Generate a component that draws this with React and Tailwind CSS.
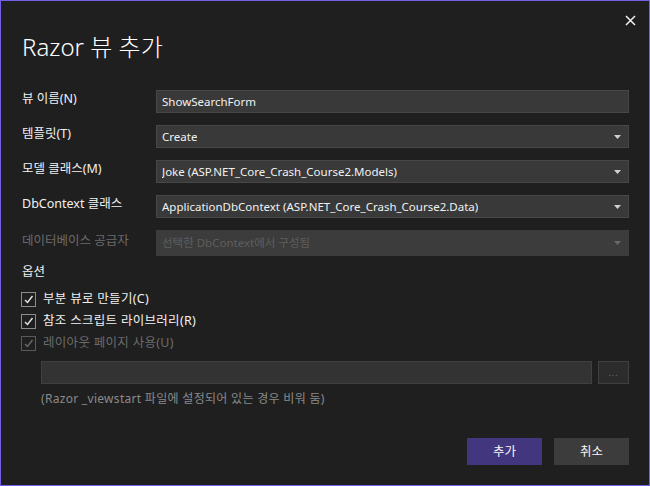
const font = { fontFamily: '"Noto Sans", "Noto Sans CJK KR", sans-serif' }

const Arrow = ({ dim }) => (
  <svg width="7" height="4" viewBox="0 0 7 4" className="mr-[2px] shrink-0">
    <path d="M0 0h7L3.5 4z" fill={dim ? '#6a6a6a' : '#d0d0d0'} />
  </svg>
)

const CheckMark = ({ color }) => (
  <svg width="11" height="11" viewBox="0 0 11 11">
    <path d="M2 6l2.5 2.5L9.5 2" fill="none" stroke={color} strokeWidth="1.4" />
  </svg>
)

const Field = ({ label, value, select, disabled }) => (
  <div className="flex items-center">
    <div
      className={`w-[135px] shrink-0 pl-px pb-[5px] text-[12.5px] ${disabled ? 'text-[#6b6b6b]' : 'text-[#f1f1f1]'}`}
    >
      {label}
    </div>
    <div
      className={`flex flex-1 items-center justify-between border px-[5px] text-[11.5px] ${
        disabled
          ? 'h-[26px] border-[#3c3c3c] bg-[#3c3c3c] text-[#5e5e5e]'
          : 'h-[23px] border-[#474747] bg-[#393939] text-[#f1f1f1]'
      }`}
    >
      <span className="truncate">{value}</span>
      {select && <Arrow dim={disabled} />}
    </div>
  </div>
)

const Checkbox = ({ label, disabled }) => (
  <label className="flex items-center gap-[7px]">
    <span
      className={`flex h-[15px] w-[15px] items-center justify-center border ${
        disabled ? 'border-[#5a5a5a]' : 'border-[#8c8c8c]'
      }`}
    >
      <CheckMark color={disabled ? '#6a6a6a' : '#e8e8e8'} />
    </span>
    <span className={`text-[12.5px] tracking-[0.3px] ${disabled ? 'text-[#6b6b6b]' : 'text-[#f1f1f1]'}`}>
      {label}
    </span>
  </label>
)

export default function App() {
  return (
    <div
      className="flex h-[486px] w-[650px] flex-col border border-[#7160e8] bg-[#1f1f1f] text-[12px] leading-[16px]"
      style={font}
    >
      <div className="flex justify-end pr-[13px] pt-[14px]">
        <svg width="11" height="11" viewBox="0 0 11 11">
          <path d="M1 1l9 9M10 1l-9 9" stroke="#f2f2f2" strokeWidth="1.5" />
        </svg>
      </div>

      <div className="px-[20px]">
        <h1 className="pl-px pt-[6px] text-[24px] font-light leading-[30px] text-white">
          Razor 뷰 추가
        </h1>

        <div className="mt-[28px] flex flex-col gap-[12px]">
          <Field label="뷰 이름(N)" value="ShowSearchForm" />
          <Field label="템플릿(T)" value="Create" select />
          <Field label="모델 클래스(M)" value="Joke (ASP.NET_Core_Crash_Course2.Models)" select />
          <Field
            label="DbContext 클래스"
            value="ApplicationDbContext (ASP.NET_Core_Crash_Course2.Data)"
            select
          />
          <Field label="데이터베이스 공급자" value="선택한 DbContext에서 구성됨" select disabled />
        </div>

        <div className="mt-[8px] pl-px text-[12.5px] text-[#f1f1f1]">옵션</div>

        <div className="mt-[11px] flex flex-col gap-[6px]">
          <Checkbox label="부분 뷰로 만들기(C)" />
          <Checkbox label="참조 스크립트 라이브러리(R)" />
          <Checkbox label="레이아웃 페이지 사용(U)" disabled />
        </div>

        <div className="ml-[20px] mt-[10px] flex gap-[6px]">
          <div className="h-[23px] flex-1 border border-[#404040] bg-[#333333]" />
          <div className="flex h-[23px] w-[31px] items-center justify-center border border-[#404040] bg-[#2c2c2c] text-[9px] tracking-[1px] text-[#6a6a6a]">
            ...
          </div>
        </div>

        <div className="ml-[20px] mt-[7px] tracking-[0.3px] text-[#8a8a8a]">
          (Razor _viewstart 파일에 설정되어 있는 경우 비워 둠)
        </div>

        <div className="mt-[31px] flex justify-end gap-[12px]">
          <button className="h-[27px] w-[75px] bg-[#42367f] text-[12.5px] text-[#f4f4f4]">추가</button>
          <button className="h-[27px] w-[75px] bg-[#3c3c3c] text-[12.5px] text-[#f4f4f4]">취소</button>
        </div>
      </div>
    </div>
  )
}
